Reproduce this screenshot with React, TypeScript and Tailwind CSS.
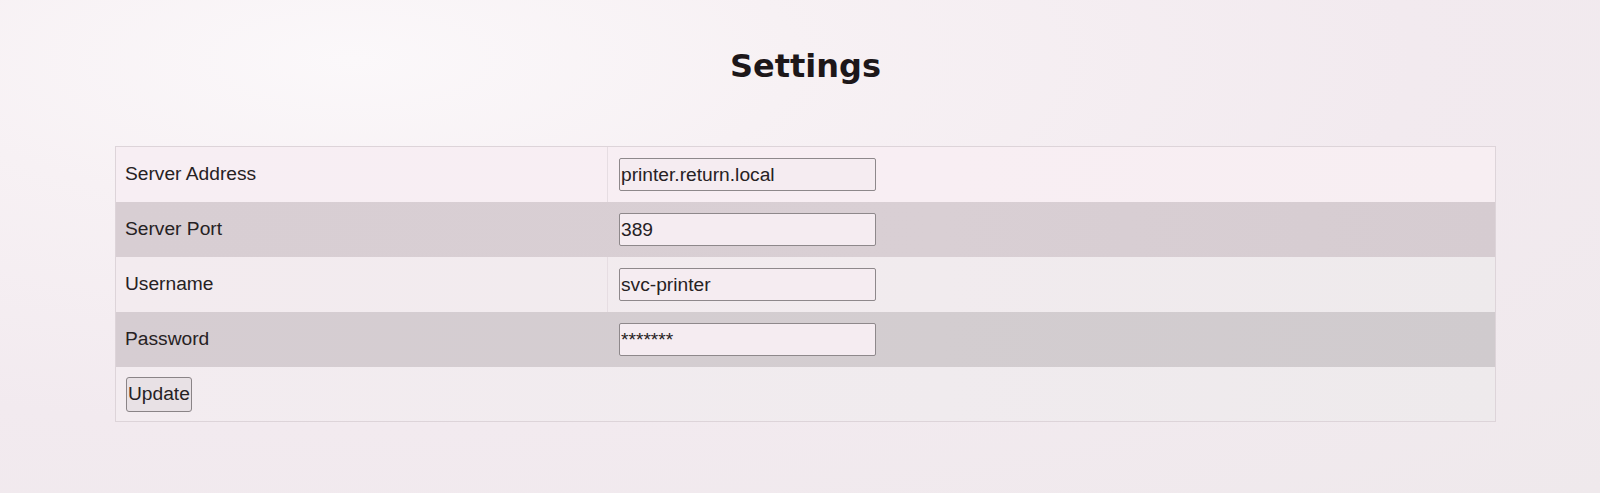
import React from "react";

const rows = [
  { label: "Server Address", value: "printer.return.local", dark: false },
  { label: "Server Port", value: "389", dark: true },
  { label: "Username", value: "svc-printer", dark: false },
  { label: "Password", value: "*******", dark: true },
];

export default function App() {
  return (
    <div className="min-h-[493px] w-full overflow-hidden bg-[#f3ecf0] bg-[radial-gradient(ellipse_at_22%_12%,#fbf8fa_0%,#f7f1f4_25%,#f2eaef_60%,#efe9ec_100%)] font-['Liberation_Sans',Arial,sans-serif] text-[#262123]">
      <div className="ml-[115px] w-[1381px] pt-[48px]">
        <h1 className="text-center font-['DejaVu_Sans',sans-serif] text-[32px] font-bold leading-[36px] text-[#1d1719]">
          Settings
        </h1>
        <div className="mt-[62px] border border-[#ddd4d9]">
          {rows.map((r, i) => (
            <div
              key={r.label}
              className={
                "flex h-[55px] items-center " +
                (r.dark
                  ? i === 1
                    ? "bg-[linear-gradient(90deg,#d8ced3,#d9cfd4_60%,#d6ccd1)]"
                    : "bg-[linear-gradient(90deg,#d6cdd2,#d3cdd0_60%,#d0cbce)]"
                  : i === 0
                  ? "bg-[linear-gradient(90deg,#f7eef3,#f8eef3_60%,#f7eef2)]"
                  : "bg-[linear-gradient(90deg,#f3ebef,#f1ebee_60%,#eeeaec)]")
              }
            >
              <div
                className={
                  "flex h-full w-[492px] items-center pl-[9px] text-[19.2px] " +
                  (r.dark ? "" : "border-r border-[#e6dde2]")
                }
              >
                {r.label}
              </div>
              <div className="flex h-full items-center pl-[11px]">
                <input
                  readOnly
                  type="text"
                  defaultValue={r.value}
                  className="h-[33px] w-[257px] rounded-[2px] border border-[#8e888b] bg-[#f5ecf1] px-[1px] text-[19.2px] text-[#262123] outline-none"
                />
              </div>
            </div>
          ))}
          <div className="flex h-[54px] items-center bg-[linear-gradient(90deg,#f3ecf0,#f0ebee_60%,#eeeaec)] pl-[10px]">
            <button className="h-[35px] rounded-[3px] border border-[#8a8487] bg-[#e8e1e5] px-[1px] text-[19.2px] leading-none text-[#262123]">
              Update
            </button>
          </div>
        </div>
      </div>
    </div>
  );
}
